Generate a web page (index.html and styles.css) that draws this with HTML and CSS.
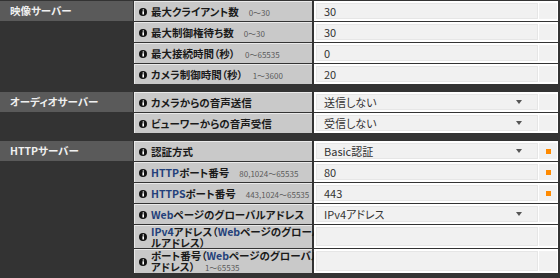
FILE: index.html
```html
<!DOCTYPE html>
<html lang="ja">
<head>
<meta charset="utf-8">
<link rel="stylesheet" href="styles.css">
</head>
<body>
<div class="panel">
  <section class="group">
    <div class="group-title">映像サーバー</div>
    <div class="rows">
      <div class="row">
        <div class="label"><svg class="ico" viewBox="0 0 8 8"><circle cx="4" cy="4" r="4" fill="#111"/><path d="M3.4 3.2h1.6v3.3H3.4z" fill="#fff"/><circle cx="4.3" cy="2" r="0.8" fill="#fff"/></svg><span class="text">最大クライアント数<small class="range">0〜30</small></span></div>
        <div class="value"><div class="field">30</div><div class="mark"></div></div>
      </div>
      <div class="row">
        <div class="label"><svg class="ico" viewBox="0 0 8 8"><circle cx="4" cy="4" r="4" fill="#111"/><path d="M3.4 3.2h1.6v3.3H3.4z" fill="#fff"/><circle cx="4.3" cy="2" r="0.8" fill="#fff"/></svg><span class="text">最大制御権待ち数<small class="range">0〜30</small></span></div>
        <div class="value"><div class="field">30</div><div class="mark"></div></div>
      </div>
      <div class="row">
        <div class="label"><svg class="ico" viewBox="0 0 8 8"><circle cx="4" cy="4" r="4" fill="#111"/><path d="M3.4 3.2h1.6v3.3H3.4z" fill="#fff"/><circle cx="4.3" cy="2" r="0.8" fill="#fff"/></svg><span class="text">最大接続時間（秒）<small class="range">0〜65535</small></span></div>
        <div class="value"><div class="field">0</div><div class="mark"></div></div>
      </div>
      <div class="row">
        <div class="label"><svg class="ico" viewBox="0 0 8 8"><circle cx="4" cy="4" r="4" fill="#111"/><path d="M3.4 3.2h1.6v3.3H3.4z" fill="#fff"/><circle cx="4.3" cy="2" r="0.8" fill="#fff"/></svg><span class="text">カメラ制御時間（秒）<small class="range">1〜3600</small></span></div>
        <div class="value"><div class="field">20</div><div class="mark"></div></div>
      </div>
    </div>
  </section>

  <section class="group">
    <div class="group-title">オーディオサーバー</div>
    <div class="rows">
      <div class="row">
        <div class="label"><svg class="ico" viewBox="0 0 8 8"><circle cx="4" cy="4" r="4" fill="#111"/><path d="M3.4 3.2h1.6v3.3H3.4z" fill="#fff"/><circle cx="4.3" cy="2" r="0.8" fill="#fff"/></svg><span class="text">カメラからの音声送信</span></div>
        <div class="value"><div class="field select">送信しない<i class="arrow"></i></div><div class="mark"></div></div>
      </div>
      <div class="row">
        <div class="label"><svg class="ico" viewBox="0 0 8 8"><circle cx="4" cy="4" r="4" fill="#111"/><path d="M3.4 3.2h1.6v3.3H3.4z" fill="#fff"/><circle cx="4.3" cy="2" r="0.8" fill="#fff"/></svg><span class="text">ビューワーからの音声受信</span></div>
        <div class="value"><div class="field select">受信しない<i class="arrow"></i></div><div class="mark"></div></div>
      </div>
    </div>
  </section>

  <section class="group">
    <div class="group-title">HTTPサーバー</div>
    <div class="rows">
      <div class="row">
        <div class="label"><svg class="ico" viewBox="0 0 8 8"><circle cx="4" cy="4" r="4" fill="#111"/><path d="M3.4 3.2h1.6v3.3H3.4z" fill="#fff"/><circle cx="4.3" cy="2" r="0.8" fill="#fff"/></svg><span class="text">認証方式</span></div>
        <div class="value"><div class="field select">Basic認証<i class="arrow"></i></div><div class="mark"><b class="req"></b></div></div>
      </div>
      <div class="row">
        <div class="label"><svg class="ico" viewBox="0 0 8 8"><circle cx="4" cy="4" r="4" fill="#111"/><path d="M3.4 3.2h1.6v3.3H3.4z" fill="#fff"/><circle cx="4.3" cy="2" r="0.8" fill="#fff"/></svg><span class="text"><em class="lat">HTTP</em>ポート番号<small class="range">80,1024〜65535</small></span></div>
        <div class="value"><div class="field">80</div><div class="mark"><b class="req"></b></div></div>
      </div>
      <div class="row">
        <div class="label"><svg class="ico" viewBox="0 0 8 8"><circle cx="4" cy="4" r="4" fill="#111"/><path d="M3.4 3.2h1.6v3.3H3.4z" fill="#fff"/><circle cx="4.3" cy="2" r="0.8" fill="#fff"/></svg><span class="text"><em class="lat">HTTPS</em>ポート番号<small class="range">443,1024〜65535</small></span></div>
        <div class="value"><div class="field">443</div><div class="mark"><b class="req"></b></div></div>
      </div>
      <div class="row">
        <div class="label"><svg class="ico" viewBox="0 0 8 8"><circle cx="4" cy="4" r="4" fill="#111"/><path d="M3.4 3.2h1.6v3.3H3.4z" fill="#fff"/><circle cx="4.3" cy="2" r="0.8" fill="#fff"/></svg><span class="text"><em class="lat">Web</em>ページのグローバルアドレス</span></div>
        <div class="value"><div class="field select">IPv4アドレス<i class="arrow"></i></div><div class="mark"></div></div>
      </div>
      <div class="row">
        <div class="label"><svg class="ico" viewBox="0 0 8 8"><circle cx="4" cy="4" r="4" fill="#111"/><path d="M3.4 3.2h1.6v3.3H3.4z" fill="#fff"/><circle cx="4.3" cy="2" r="0.8" fill="#fff"/></svg><span class="text"><em class="lat">IPv4</em>アドレス（<em class="lat">Web</em>ページのグローバ<br>ルアドレス）</span></div>
        <div class="value"><div class="field"></div><div class="mark"></div></div>
      </div>
      <div class="row">
        <div class="label"><svg class="ico" viewBox="0 0 8 8"><circle cx="4" cy="4" r="4" fill="#111"/><path d="M3.4 3.2h1.6v3.3H3.4z" fill="#fff"/><circle cx="4.3" cy="2" r="0.8" fill="#fff"/></svg><span class="text">ポート番号（<em class="lat">Web</em>ページのグローバル<br>アドレス）<small class="range">1〜65535</small></span></div>
        <div class="value"><div class="field"></div><div class="mark"></div></div>
      </div>
    </div>
  </section>
</div>
</body>
</html>
```

FILE: styles.css
```css
html, body {
  margin: 0;
  background: #333;
}
body {
  font-family: "Noto Sans CJK JP", "Noto Sans", sans-serif;
  font-feature-settings: "palt";
}
.panel {
  padding-top: 1px;
  display: flex;
  flex-direction: column;
  gap: 8px;
}
.group {
  display: flex;
  gap: 1px;
}
.group-title {
  width: 133px;
  height: 20px;
  box-sizing: border-box;
  padding-left: 10px;
  background: #5a5a5a;
  color: #f0f0f0;
  font-size: 10.5px;
  font-weight: bold;
  line-height: 20px;
}
.rows {
  display: flex;
  flex-direction: column;
  gap: 1px;
}
.row {
  display: flex;
  gap: 2px;
  min-height: 20px;
}
.label {
  width: 178px;
  box-sizing: border-box;
  background: #c9c9c9;
  border-top: 1px solid #e9e9e9;
  border-left: 1px solid #e9e9e9;
  display: flex;
  align-items: center;
  gap: 4px;
  padding-left: 4px;
  color: #1a1a1a;
  font-size: 10.5px;
  font-weight: bold;
  line-height: 11px;
}
.ico {
  width: 8px;
  height: 8px;
  flex: none;
}
.text {
  white-space: nowrap;
}
.lat {
  font-style: normal;
  color: #23407a;
}
.range {
  margin-left: 10px;
  font-size: 8px;
  font-weight: normal;
  color: #5a5a5a;
}
.value {
  width: 244px;
  box-sizing: border-box;
  background: #fff;
  padding: 2px 1px 2px 2px;
  display: flex;
  gap: 1px;
}
.field {
  flex: 1;
  box-sizing: border-box;
  background: #f1f1f1;
  border: 1px solid #e6e6e6;
  padding: 0 15px 0 7px;
  display: flex;
  align-items: center;
  justify-content: space-between;
  color: #333;
  font-size: 11px;
  line-height: 14px;
}
.arrow {
  width: 0;
  height: 0;
  border-left: 3px solid transparent;
  border-right: 3px solid transparent;
  border-top: 4px solid #555;
}
.mark {
  width: 18px;
  background: #f1f1f1;
  display: flex;
  align-items: center;
  justify-content: center;
}
.req {
  width: 5px;
  height: 5px;
  background: #ff8a00;
}
```
